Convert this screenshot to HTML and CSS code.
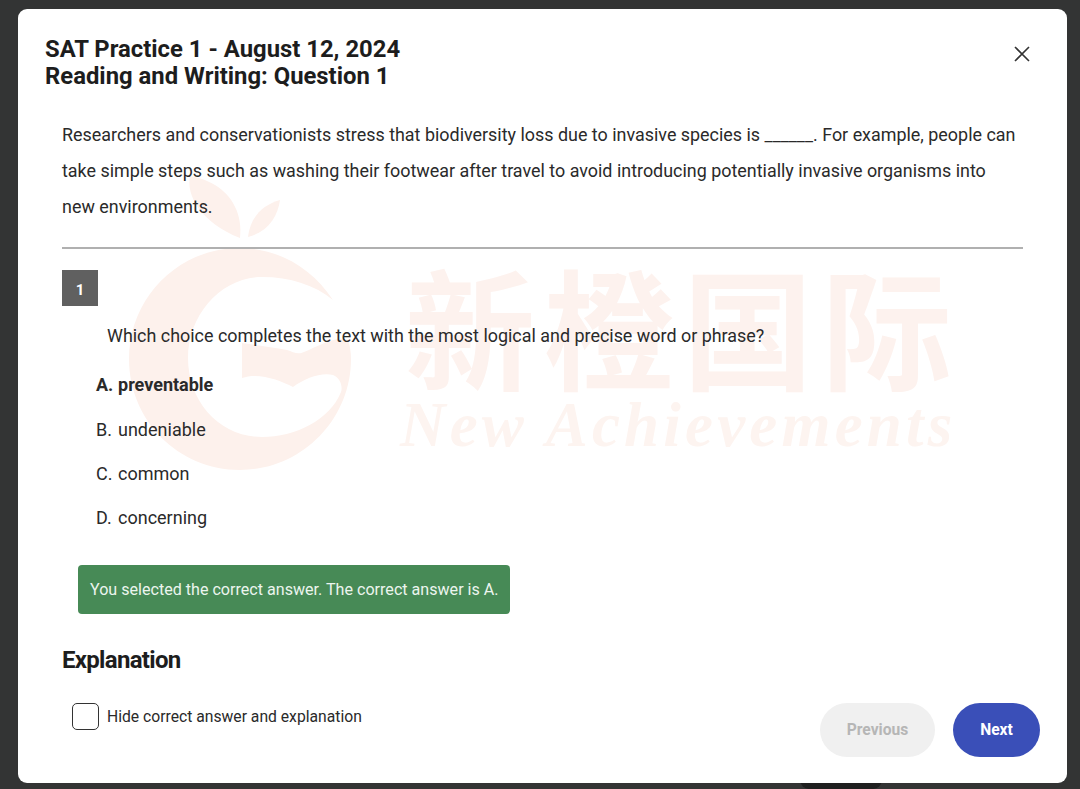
FILE: index.html
```html
<!DOCTYPE html>
<html lang="en">
<head>
<meta charset="utf-8">
<title>SAT Practice 1</title>
<link rel="stylesheet" href="styles.css">
</head>
<body>
<div class="under-tab"></div>
<main class="modal">
  <div class="watermark" aria-hidden="true">
    <svg class="wm-logo" viewBox="120 170 240 310" width="240" height="310">
      <path class="wm-fill" d="M190 176C186 195 200 222 240 238C243 215 232 195 215 185C207 180 197 177 190 176Z"/>
      <path class="wm-fill" d="M248 237C250 218 262 205 280 200C278 216 268 232 248 237Z"/>
      <path class="wm-fill" d="M333 300C312 268 278 248 240 248C178 248 129 298 129 359C129 420 178 470 240 470C301 470 351 420 351 359C351 352 350 346 348 340C338 335 320 345 304 352C298 355 293 352 287 350C272 347 256 345 242 343L242 378C258 372 280 380 293 387C305 378 322 372 333 375C340 378 343 386 341 392C330 420 295 437 262 437C220 437 188 402 188 358C188 314 222 277 262 277C290 277 315 285 333 300Z"/>
    </svg>
    <div class="wm-text">
      <div class="wm-cn">新橙国际</div>
      <div class="wm-en">New Achievements</div>
    </div>
  </div>
  <header class="head">
    <h1 class="title">SAT Practice 1 - August 12, 2024<br>Reading and Writing: Question 1</h1>
    <button class="close" aria-label="Close">
      <svg viewBox="0 0 16 16" width="16" height="16"><path d="M1 1L15 15M15 1L1 15"/></svg>
    </button>
  </header>
  <section class="body">
    <p class="passage">Researchers and conservationists stress that biodiversity loss due to invasive species is ______. For example, people can take simple steps such as washing their footwear after travel to avoid introducing potentially invasive organisms into new environments.</p>
    <hr class="rule">
    <div class="qnum">1</div>
    <p class="question">Which choice completes the text with the most logical and precise word or phrase?</p>
    <ul class="choices">
      <li class="choice selected"><span class="letter">A.</span><span>preventable</span></li>
      <li class="choice"><span class="letter">B.</span><span>undeniable</span></li>
      <li class="choice"><span class="letter">C.</span><span>common</span></li>
      <li class="choice"><span class="letter">D.</span><span>concerning</span></li>
    </ul>
    <div class="result">You selected the correct answer. The correct answer is A.</div>
    <h2 class="explain">Explanation</h2>
  </section>
  <footer class="foot">
    <label class="hide"><span class="box"></span><span>Hide correct answer and explanation</span></label>
    <div class="nav">
      <button class="btn prev">Previous</button>
      <button class="btn next">Next</button>
    </div>
  </footer>
</main>
</body>
</html>
```
FILE: styles.css
```css
* { box-sizing: border-box; }
html, body { margin: 0; height: 789px; overflow: hidden; }
body {
  background: #333434;
  font-family: Roboto, "Liberation Sans", sans-serif;
  color: #272727;
  padding: 9px 13px 6px 18px;
}
.under-tab {
  position: absolute;
  left: 800px;
  top: 780px;
  width: 82px;
  height: 9px;
  border-radius: 0 0 14px 14px;
  background: #1f1f1f;
}
.modal {
  position: relative;
  width: 1049px;
  height: 774px;
  background: #fff;
  border-radius: 9px;
  overflow: hidden;
}
.watermark { position: absolute; inset: 0; pointer-events: none; }
.wm-logo { position: absolute; left: 102px; top: 161px; }
.wm-fill { fill: #fdf1ec; }
.wm-text { position: absolute; left: 387px; top: 247px; width: 560px; }
.wm-cn {
  font-family: "Noto Sans CJK SC", sans-serif;
  font-size: 130px;
  font-weight: 700;
  line-height: 135px;
  letter-spacing: 9px;
  color: #fdf2ee;
  white-space: nowrap;
}
.wm-en {
  margin: 3px 0 0 -5px;
  font-family: "Liberation Serif", serif;
  font-style: italic;
  font-weight: 700;
  font-size: 63px;
  line-height: 63px;
  letter-spacing: 4.2px;
  color: #fdf4f0;
  white-space: nowrap;
}
.head {
  position: relative;
  display: flex;
  justify-content: space-between;
  padding: 27px 37px 0 27px;
}
.title {
  margin: 0;
  font-size: 23.85px;
  line-height: 27px;
  font-weight: 700;
  color: #1d1d1d;
}
.close {
  border: 0;
  background: none;
  padding: 0;
  margin-top: 10px;
  width: 16px;
  height: 16px;
}
.close svg { display: block; fill: none; stroke: #333; stroke-width: 1.6; }
.body { position: relative; padding: 27px 44px 0; }
.passage {
  margin: 0;
  font-size: 17.92px;
  line-height: 36px;
  color: #2a2a2a;
}
.rule { margin: 22px 0 0; border: 0; border-top: 2px solid #b0b0b0; }
.qnum {
  margin-top: 21px;
  width: 36px;
  height: 36px;
  background: #606060;
  color: #fff;
  font-size: 15px;
  font-weight: 700;
  line-height: 40px;
  text-align: center;
}
.question {
  margin: 16px 0 0 45px;
  font-size: 17.92px;
  line-height: 28px;
  color: #2a2a2a;
}
.choices { list-style: none; margin: 12.5px 0 0 34px; padding: 0; }
.choice {
  display: flex;
  gap: 6px;
  height: 44.4px;
  align-items: center;
  font-size: 18px;
  color: #2a2a2a;
}
.choice.selected { font-weight: 700; }
.letter { width: 16px; }
.result {
  margin: 25px 0 0 16px;
  width: 432px;
  height: 49px;
  background: #478a56;
  border-radius: 4px;
  color: #ecf5ee;
  font-size: 16.1px;
  line-height: 49px;
  padding-left: 12px;
  white-space: nowrap;
}
.explain {
  margin: 30px 0 0;
  font-size: 24px;
  line-height: 32px;
  font-weight: 700;
  letter-spacing: -0.7px;
  color: #1d1d1d;
}
.foot {
  position: absolute;
  left: 54px;
  right: 27px;
  top: 694px;
  display: flex;
  justify-content: space-between;
  align-items: flex-start;
}
.hide { display: flex; align-items: center; gap: 8px; font-size: 15.7px; color: #2a2a2a; height: 27px; }
.box {
  width: 27px;
  height: 27px;
  border: 1.5px solid #333;
  border-radius: 5px;
  background: #fff;
}
.nav { display: flex; gap: 18px; }
.btn {
  height: 54px;
  border: 0;
  border-radius: 27px;
  font-family: inherit;
  font-size: 15.6px;
  font-weight: 700;
}
.prev { width: 115px; background: #f0f0f0; color: #b6b6b6; }
.next { width: 87px; background: #3a4fb8; color: #fff; }
```
